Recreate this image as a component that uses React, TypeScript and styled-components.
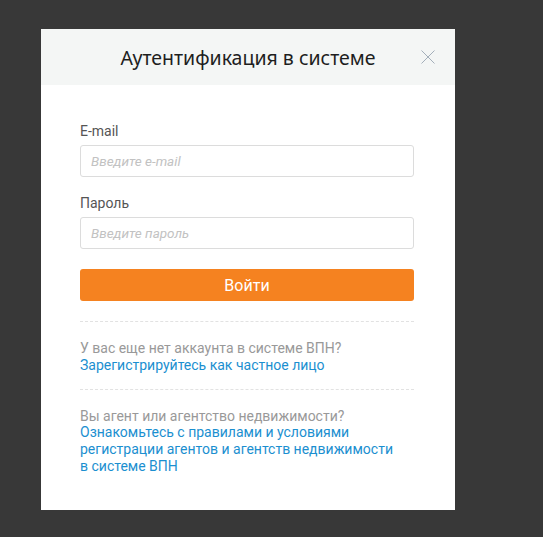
import React from "react";
import styled, { createGlobalStyle } from "styled-components";

const Global = createGlobalStyle`
  html, body { margin: 0; padding: 0; background: #383838; }
  body { font-family: Roboto, "Liberation Sans", sans-serif; }
  * { box-sizing: border-box; }
`;

const Page = styled.div`
  width: 543px;
  height: 537px;
  padding: 29px 0 0 41px;
  background: #383838;
`;

const Modal = styled.div`
  width: 414px;
  height: 481px;
  background: #fff;
  display: flex;
  flex-direction: column;
`;

const Header = styled.div`
  height: 56px;
  background: #f4f6f5;
  display: flex;
  align-items: center;
  justify-content: center;
  position: relative;
`;

const Title = styled.h1`
  margin: 0;
  font-family: "Noto Sans", "Open Sans", sans-serif;
  font-weight: 400;
  font-size: 19.5px;
  color: #1e1e1e;
`;

const Close = styled.button`
  position: absolute;
  right: 20px;
  top: 21px;
  width: 14px;
  height: 14px;
  padding: 0;
  border: 0;
  background: none;
  display: flex;
`;

const Body = styled.div`
  padding: 36px 41px 0 39px;
  display: flex;
  flex-direction: column;
`;

const Label = styled.label`
  font-size: 14px;
  line-height: 20px;
  color: #555;
  margin-bottom: 4px;
`;

const Input = styled.input<{ $gap?: number }>`
  height: 32px;
  width: 100%;
  border: 1px solid #dcdcdc;
  border-radius: 3px;
  padding: 0 10px;
  font-family: Roboto, sans-serif;
  font-size: 13.5px;
  margin-bottom: ${(p) => p.$gap ?? 16}px;
  &::placeholder {
    color: #c2c2c2;
    font-style: italic;
  }
`;

const Submit = styled.button`
  height: 32px;
  width: 100%;
  border: 0;
  border-radius: 3px;
  background: #f58220;
  color: #fff;
  font-family: Roboto, sans-serif;
  font-size: 16px;
  margin-top: 4px;
`;

const Section = styled.div<{ $top: number }>`
  margin-top: ${(p) => p.$top}px;
  border-top: 1px dashed #e2e2e2;
  padding-top: 18px;
  font-size: 14px;
  line-height: 16.8px;
`;

const Muted = styled.div`
  color: #999;
`;

const Link = styled.a`
  color: #1b8fd0;
  text-decoration: none;
  display: block;
`;

export default function App() {
  return (
    <>
      <Global />
      <Page>
        <Modal>
          <Header>
            <Title>Аутентификация в системе</Title>
            <Close aria-label="close">
              <svg width="14" height="14" viewBox="0 0 14 14">
                <path d="M0.5 0.5L13.5 13.5M13.5 0.5L0.5 13.5" stroke="#a4afba" strokeWidth="1" />
              </svg>
            </Close>
          </Header>
          <Body>
            <Label>E-mail</Label>
            <Input placeholder="Введите e-mail" />
            <Label>Пароль</Label>
            <Input type="password" placeholder="Введите пароль" $gap={16} />
            <Submit>Войти</Submit>
            <Section $top={20}>
              <Muted>У вас еще нет аккаунта в системе ВПН?</Muted>
              <Link href="#">Зарегистрируйтесь как частное лицо</Link>
            </Section>
            <Section $top={15}>
              <Muted>Вы агент или агентство недвижимости?</Muted>
              <Link href="#">
                Ознакомьтесь с правилами и условиями
                <br />
                регистрации агентов и агентств недвижимости
                <br />в системе ВПН
              </Link>
            </Section>
          </Body>
        </Modal>
      </Page>
    </>
  );
}
